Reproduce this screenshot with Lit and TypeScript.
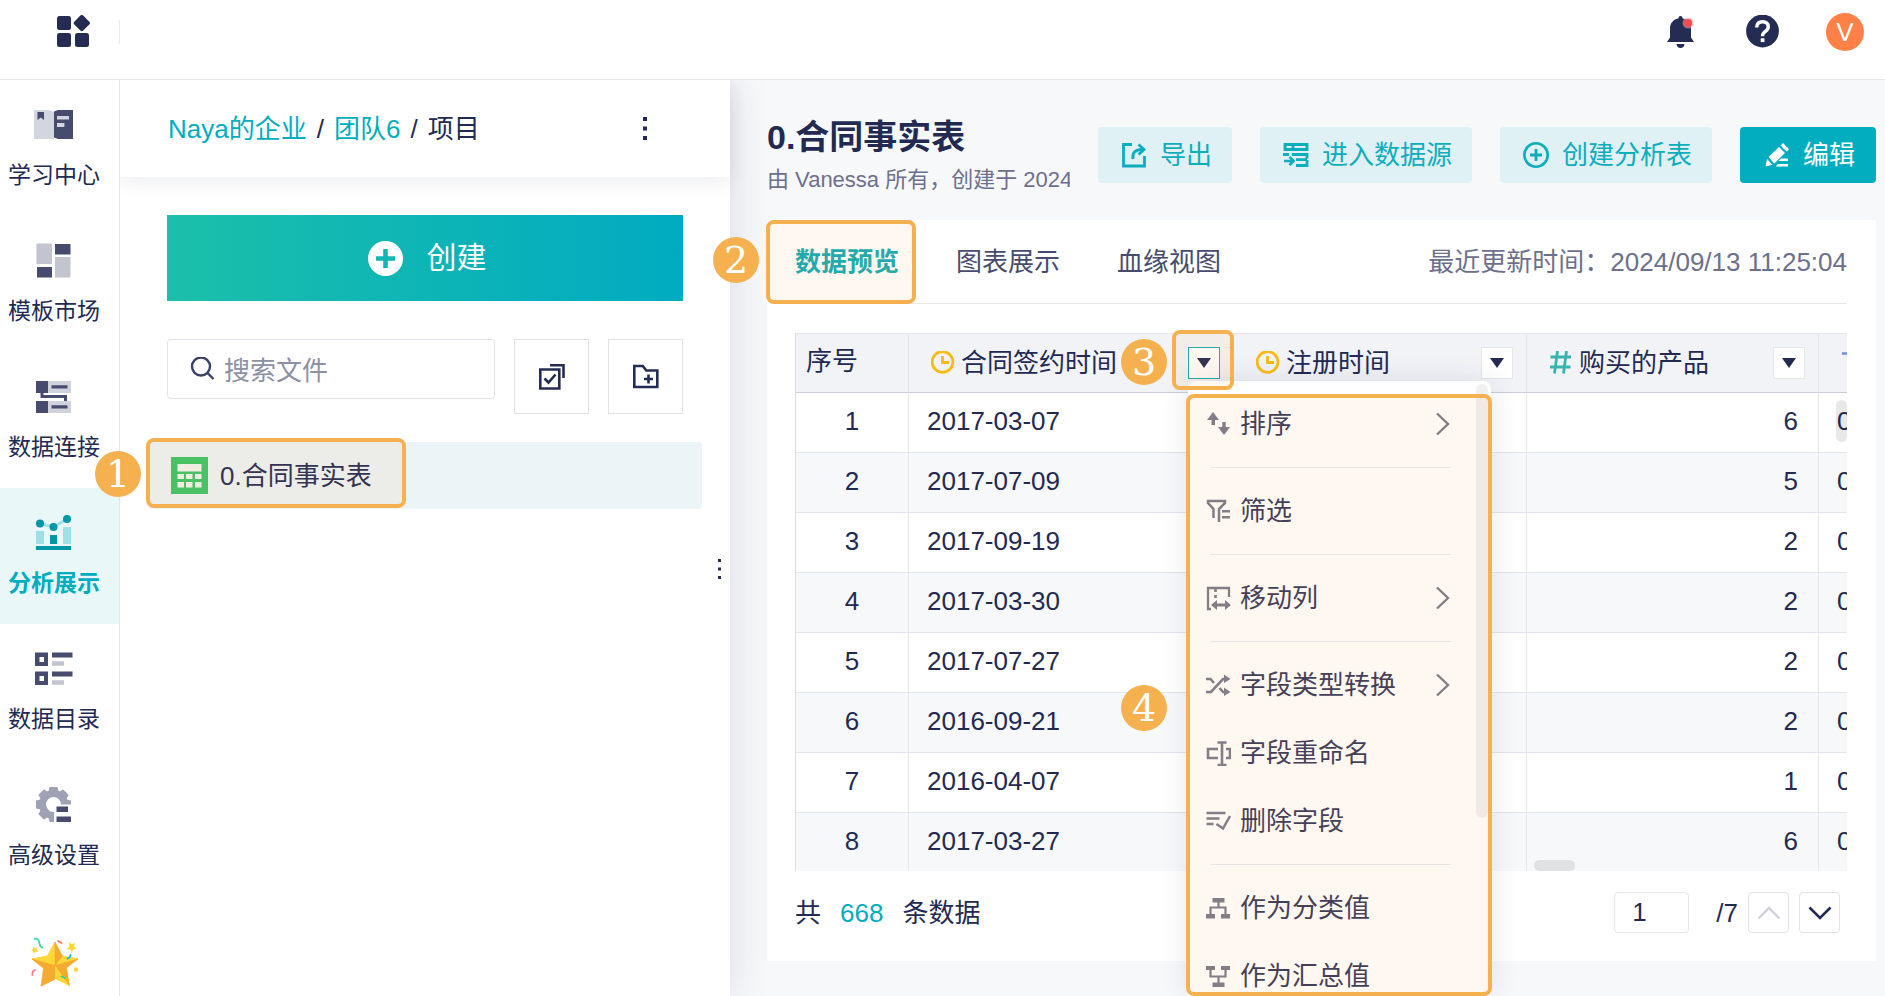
import { LitElement, html, svg, css } from "lit";
import { customElement, state } from "lit/decorators.js";
import { classMap } from "lit/directives/class-map.js";

const icons = {
  learn: svg`<path fill="#d3d5df" d="M0 5h15l5 2v27H0z"/><path fill="#474c6e" d="M39 5H24l-4 1.5v26L24 34h15z"/><path fill="#474c6e" d="M3.5 7H10v8l-3.2-2.4L3.5 15z"/><path fill="#d3d5df" d="M23 11h12v3.4H23zM23 18h7.4v4H23z"/>`,
  market: svg`<path fill="#c2c4d0" d="M2.5 2.5H18V23H2.5zM21 16h15.5v20.5H21z"/><path fill="#474c6e" d="M21 3h15.5v10.5H21zM3 26h15v10.5H3z"/>`,
  connect: svg`<path fill="#d0d2dc" d="M13 4h24v12H13zM13 24h24v12H13z"/><path fill="#474c6e" d="M2 4h12v12H9.5v2H33v6h-3v-3H6.500v-5H2zM2 24h12v12H2zM17.500 8.300h16v3.200h-16zM17.500 28.300h16v3.200h-16z"/>`,
  analyze: svg`<path fill="none" stroke="#9ee0e6" stroke-width="2.800" d="M6 10.500 19.500 14 33 6"/><path fill="#9ee0e6" d="M2 18h8v13H2zM29 14h8v17h-8z"/><path fill="#0097a7" d="M16 22h7v9h-7zM2 33h35v4H2z"/><circle cx="6" cy="10.500" r="4" fill="#0097a7"/><circle cx="19.500" cy="14" r="4" fill="#0097a7"/><circle cx="33" cy="6" r="4" fill="#0097a7"/>`,
  catalog: svg`<path fill="#474c6e" fill-rule="evenodd" d="M1 3.500h13V17H1zM5.500 8v5H10V8zM1 22.500h13V36H1zM5.500 27v5H10v-5zM18 3.500h20.500v5H18zM18 22.500h20.500v5H18z"/><path fill="#c2c4d0" d="M18 12.300h12v4.500H18zM18 31.300h12v4.500H18z"/>`,
  advanced: svg`<circle cx="19.500" cy="19.500" r="11" fill="none" stroke="#9fa1b5" stroke-width="7"/>${[0, 45, 90, 135, 180, 225, 270, 315].map(
    (a) => svg`<path fill="#9fa1b5" d="M15.500 2h8l1 5h-10z" transform="rotate(${a} 19.500 19.500)"/>`
  )}<path fill="#fff" d="M20 19.500h19V39H20z"/><path fill="#474c6e" d="M22.500 21.500H34V27H22.500zM22.500 31.500h14.500v5.500H22.500z"/>`,
  sort: svg`<path fill="#7b7a8a" d="M7 0l6 8H9v5H5.500V8H1zM18 23l-6-8h4.300v-5h3.400v5H24z"/>`,
  filter: svg`<path fill="none" stroke="#7b7a8a" stroke-width="2.500" d="M7.500 19v-9L2 4V2.100h17V4l-6 6v13"/><path fill="#7b7a8a" d="M16 11h8v2.600h-8zM16 17h8v2.600h-8z"/>`,
  move: svg`<path fill="none" stroke="#7b7a8a" stroke-width="2.300" d="M5 23H2V2h21v9"/><path stroke="#7b7a8a" stroke-width="2.600" d="M9.500 2v4M9.500 9v3"/><path fill="#7b7a8a" d="M5 19l6-5v3.500h8V14l6 5-6 5v-3.500h-8V24z"/>`,
  convert: svg`<path fill="none" stroke="#7b7a8a" stroke-width="2.600" d="M0 19h5L17 6h3M0 6h4.500l3.500 4M13.500 15l3.500 4h3"/><path fill="#7b7a8a" d="M18 1.500 24.500 6 18 10zM18 14.500l6.500 4.500-6.500 4z"/>`,
  rename: svg`<path fill="none" stroke="#7b7a8a" stroke-width="2.600" d="M12 8H2v9h10M20 8h4v9h-4M11.500 1.500h9M11.500 24h9M16 1v23"/>`,
  remove: svg`<path fill="none" stroke="#7b7a8a" stroke-width="2.500" d="M.5 4h19M.5 9.500h13M.5 15h7M10.500 15l6.500 4.500L24 7"/>`,
  dimension: svg`<path fill="#7b7a8a" d="M6.500 2h12v4.500h-12zM0 18h9v4.500H0zM15 18h9v4.500h-9z"/><path fill="none" stroke="#7b7a8a" stroke-width="2.200" d="M12.500 6v5.500M4.500 19v-7.500h15V19"/>`,
  measure: svg`<path fill="#7b7a8a" d="M0 2h9v4H0zM15 2h9v4h-9zM6.500 18.500h12V23h-12z"/><path fill="none" stroke="#7b7a8a" stroke-width="2.200" d="M4.500 5v7.500h15V5M12.500 12v7"/>`,
  clock: svg`<circle cx="11.500" cy="11" r="10.400" fill="none" stroke="#fbbb16" stroke-width="2.800"/><path fill="none" stroke="#fbbb16" stroke-width="2.800" d="M11.500 5v6.500H18"/>`,
  hash: svg`<path fill="none" stroke="#37b4ac" stroke-width="2.800" d="M8.500 0 5.500 22.500M17.500 0l-3 22.500M1.500 6H22M1 16h20.500"/>`,
  text: svg`<path fill="none" stroke="#6f8fe0" stroke-width="2.600" d="M1 2.500h20M11 2.500V23"/>`,
  exportIcon: svg`<path fill="none" stroke="currentColor" stroke-width="2.800" d="M11 2.500H2.500v21.500H23.500V14M12 17c-1-6 2-9.500 9-9.500"/><path fill="none" stroke="currentColor" stroke-width="2.800" d="M17.500 2.500l5.500 5-5.500 5"/>`,
  source: svg`<path fill="none" stroke="currentColor" stroke-width="2.800" d="M2 2.500h22v5H2zM10 2.500v5M0 12.500h6M9 12.500h15v4M24 18v5.500H13M13 17.700h11"/><path fill="none" stroke="currentColor" stroke-width="2.600" d="M1 19h9M6.500 14.800l4.200 4.200-4.200 4.200"/>`,
  plusRing: svg`<circle cx="13" cy="13" r="11.700" fill="none" stroke="currentColor" stroke-width="2.600"/><path stroke="currentColor" stroke-width="2.800" d="M13 7v12M7 13h12"/>`,
  pencil: svg`<path fill="currentColor" d="M1.500 24.500 3 17l5.500 5.800zM4.500 15 15 5l6 6L10.300 21.500zM16.500 3.500 19 1l6 6.200-2.500 2.400zM17 16.500h7V19h-9.500zM14 22h10v2.500H11.500z"/>`,
};

type IconName = keyof typeof icons;

const navItems: { icon: IconName; label: string }[] = [
  { icon: "learn", label: "学习中心" },
  { icon: "market", label: "模板市场" },
  { icon: "connect", label: "数据连接" },
  { icon: "analyze", label: "分析展示" },
  { icon: "catalog", label: "数据目录" },
  { icon: "advanced", label: "高级设置" },
];

const tabs = ["数据预览", "图表展示", "血缘视图"];

const columns: { icon: IconName; label: string }[] = [
  { icon: "clock", label: "合同签约时间" },
  { icon: "clock", label: "注册时间" },
  { icon: "hash", label: "购买的产品" },
];

const rows: [string, string][] = [
  ["2017-03-07", "6"],
  ["2017-07-09", "5"],
  ["2017-09-19", "2"],
  ["2017-03-30", "2"],
  ["2017-07-27", "2"],
  ["2016-09-21", "2"],
  ["2016-04-07", "1"],
  ["2017-03-27", "6"],
];

const menu: { icon: IconName; label: string; sub?: boolean; line?: boolean }[] = [
  { icon: "sort", label: "排序", sub: true, line: true },
  { icon: "filter", label: "筛选", line: true },
  { icon: "move", label: "移动列", sub: true, line: true },
  { icon: "convert", label: "字段类型转换", sub: true },
  { icon: "rename", label: "字段重命名" },
  { icon: "remove", label: "删除字段", line: true },
  { icon: "dimension", label: "作为分类值" },
  { icon: "measure", label: "作为汇总值" },
];

const glyph = (name: IconName, box: number) =>
  html`<svg width=${box} height=${box} viewBox="0 0 ${box} ${box}" aria-hidden="true">${icons[name]}</svg>`;

@customElement("app-root")
export class AppRoot extends LitElement {
  @state() private nav = 3;
  @state() private tab = 0;

  static styles = css`
    :host {
      display: flex;
      flex-direction: column;
      height: 100vh;
      overflow: hidden;
      background: #fff;
      color: #232a52;
      font-family: "Liberation Sans", "Noto Sans CJK SC", sans-serif;
      font-size: 26px;
      line-height: 36px;
    }
    * { box-sizing: border-box; }
    svg { display: block; flex: none; }
    a { color: inherit; text-decoration: none; }
    button, input { font: inherit; color: inherit; margin: 0; padding: 0; border: 0; background: none; border-radius: 0; }
    button { cursor: pointer; }

    .topbar { display: flex; align-items: center; flex: none; height: 80px; padding: 0 21px 16px 56px; border-bottom: 1px solid #e6e7ea; }
    .brand { display: flex; align-items: center; width: 64px; height: 24px; border-right: 1px solid #e9e9ee; }
    .tools { display: flex; align-items: center; gap: 47px; margin-left: auto; }
    .avatar { width: 38px; height: 38px; border-radius: 50%; background: #ff8148; color: #fff; text-align: center; }

    .body { position: relative; display: flex; flex: 1; min-height: 0; }

    .sidebar { flex: none; width: 120px; border-right: 1px solid #e6e7ea; font-size: 23px; line-height: 30px; overflow: hidden; }
    .nav-item { display: flex; flex-direction: column; align-items: center; gap: 15px; height: 136px; padding: 25px 11px 0 0; white-space: nowrap; }
    .nav-item.active { background: #e9f7f9; color: #00adbf; font-weight: 700; }
    .star { display: flex; justify-content: center; padding: 41px 10px 0 0; }

    .files { position: relative; z-index: 1; flex: none; width: 610px; background: #fff; box-shadow: 0 0 40px rgba(35, 42, 82, 0.14); clip-path: inset(0 -60px 0 0); }
    .files-head { display: flex; align-items: center; height: 97px; padding: 0 83px 0 48px; box-shadow: 0 4px 20px rgba(35, 42, 82, 0.09); }
    .crumbs { display: flex; gap: 10px; }
    .crumbs a { color: #00adbf; }
    .more { margin-left: auto; }
    .files-body { padding: 38px 47px; }
    .create { display: flex; align-items: center; justify-content: center; gap: 24px; width: 100%; height: 86px; padding-left: 4px; font-size: 30px; color: #fff; background: linear-gradient(90deg, #1bbfaa, #00abc1); }
    .search-row { display: flex; align-items: flex-start; gap: 19px; margin-top: 38px; }
    .search { display: flex; align-items: center; gap: 9px; flex: 1; min-width: 0; height: 60px; padding: 0 22px; border: 1px solid #e1e2ea; border-radius: 4px; }
    .search input { flex: 1; min-width: 0; height: 44px; padding-top: 4px; outline: none; }
    .search input::placeholder { color: #8d90a5; opacity: 1; }
    .square { display: flex; align-items: center; justify-content: center; width: 75px; height: 75px; border: 1px solid #e1e2e8; }
    .file { position: relative; display: flex; align-items: center; gap: 12px; height: 67px; margin: 28px -19px 0; padding: 0 23px; background: #ebf4f7; border-radius: 4px; }
    .resize { position: absolute; right: 9px; top: 479px; }

    .main { position: relative; flex: 1; min-width: 0; display: flex; flex-direction: column; padding: 0 9px 35px 37px; background: #f7f8fa; }
    .main-head { display: flex; flex: none; align-items: flex-start; gap: 28px; height: 140px; padding-top: 36px; }
    .heading { flex: 1; min-width: 0; overflow: hidden; white-space: nowrap; }
    .heading h1 { margin: 0; font-size: 34px; line-height: 42px; font-weight: 700; }
    .heading p { margin: 0; font-size: 22px; line-height: 44px; color: #6d708c; }
    .action { display: flex; align-items: center; gap: 13px; flex: none; height: 56px; margin-top: 11px; padding: 0 20px 0 23px; border-radius: 4px; background: #dff1f5; color: #0cadbd; white-space: nowrap; }
    .action.primary { padding: 0 21px 0 24px; background: #02adc0; color: #fff; }

    .card { position: relative; display: flex; flex-direction: column; flex: 1; min-height: 0; padding: 0 29px 0 28px; background: #fff; }
    .tabs { display: flex; align-items: center; gap: 57px; flex: none; height: 84px; border-bottom: 1px solid #e6e7ea; }
    .tab { white-space: nowrap; color: #474c6e; }
    .tab.active { color: #12abb4; font-weight: 700; }
    .updated { margin-left: auto; color: #6d708c; white-space: nowrap; }

    .grid { position: relative; flex: 1; min-height: 0; margin-top: 29px; overflow: hidden; border-left: 1px solid #dcdee6; border-top: 1px solid #e6e7ec; }
    table { width: 1315px; table-layout: fixed; border-collapse: separate; border-spacing: 0; }
    .c-no { width: 113px; }
    .c-sign { width: 325px; }
    .c-reg { width: 293px; }
    .c-buy, .c-last { width: 292px; }
    th { height: 59px; padding: 0; font-weight: 400; text-align: left; background: #f2f3f7; border-right: 1px solid #e3e5ea; border-bottom: 1px solid #cccfd9; }
    th.no { padding: 0 0 5px 10px; }
    .th { display: flex; align-items: center; gap: 6px; padding: 0 13px 0 22px; white-space: nowrap; }
    .drop { display: flex; align-items: center; justify-content: center; width: 32px; height: 32px; margin-left: auto; border: 1px solid #e6e7ec; background: #fff; }
    .drop.open { border-color: #12abb4; }
    td { height: 60px; padding: 0 20px 3px 18px; border-right: 1px solid #e6e7ec; border-bottom: 1px solid #e3e5ec; }
    td.no { padding: 0 0 3px; text-align: center; }
    td.num { text-align: right; }
    tr:nth-child(even) td { background: #f7f8fa; }
    .v-thumb { position: absolute; right: 0; top: 66px; width: 11px; height: 42px; border-radius: 6px; background: rgba(0, 0, 0, 0.09); }
    .h-thumb { position: absolute; left: 738px; bottom: 0; width: 41px; height: 11px; border-radius: 6px; background: rgba(0, 0, 0, 0.09); }

    .pager { display: flex; align-items: center; flex: none; height: 90px; padding: 0 7px 7px 0; }
    .count { color: #00adbf; margin: 0 19px; }
    .page { width: 75px; height: 41px; margin: 0 27px 0 auto; padding: 0 17px; border: 1px solid #e6e7ec; border-radius: 4px; }
    .step { display: flex; align-items: center; justify-content: center; width: 41px; height: 41px; margin-left: 10px; border: 1px solid #e1e3e8; border-radius: 4px; }

    .menu { position: absolute; left: 458px; top: 301px; bottom: 0; width: 303px; background: #fff; border-radius: 8px 8px 0 0; box-shadow: 0 0 28px rgba(35, 42, 82, 0.12); }
    .menu-list { height: 100%; padding-top: 9px; overflow: hidden; }
    .menu-item { display: flex; align-items: center; gap: 9px; width: 100%; height: 68px; padding: 0 41px 0 18px; white-space: nowrap; color: #36385a; }
    .menu-item .chev { margin-left: auto; }
    .rule { height: 1px; margin: 9px 40px 9px 23px; background: #e9e9ee; }
    .menu-thumb { position: absolute; right: 3px; top: 3px; width: 12px; height: 434px; border-radius: 6px; background: rgba(0, 0, 0, 0.06); }

    .mark { position: absolute; border: 4px solid #f5b14f; border-radius: 8px; background: rgba(255, 168, 80, 0.08); pointer-events: none; }
    .badge { position: absolute; z-index: 3; width: 46px; height: 46px; border-radius: 50%; background: #f5b14f; color: #fff; font: 38px/46px "DejaVu Serif", serif; text-align: center; pointer-events: none; }
    .mark-file { left: -2px; top: -4px; width: 260px; height: 70px; }
    .badge-file { left: 95px; top: 371px; }
    .mark-tab { left: -1px; top: 0; width: 150px; height: 84px; }
    .badge-tab { left: 713px; top: 157px; }
    .mark-drop { left: 442px; top: 250px; width: 62px; height: 60px; }
    .badge-drop { left: 391px; top: 259px; }
    .mark-menu { left: -2px; right: -1px; top: 13px; bottom: 0; }
    .badge-menu { left: 391px; top: 605px; }
  `;

  private caret() {
    return html`<svg width="14" height="10" viewBox="0 0 14 10" aria-hidden="true"><path fill="#232a52" d="M0 0h14L7 10z" /></svg>`;
  }

  private dots(size: number, height: number) {
    const step = (height - size) / 2;
    return html`<svg width=${size} height=${height} aria-hidden="true">
      ${[0, 1, 2].map((i) => svg`<rect y=${i * step} width=${size} height=${size} fill="#232a52"/>`)}
    </svg>`;
  }

  private topbar() {
    return html`<header class="topbar">
      <a class="brand" href="#" aria-label="应用">
        <svg width="36" height="34" viewBox="0 0 36 34"><g fill="#252c53"><rect x="1" y="1" width="14" height="14" rx="2.500"/><rect x="1" y="18" width="14" height="14" rx="2.500"/><rect x="19" y="18" width="14" height="14" rx="2.500"/><rect x="19.500" y="1.800" width="12.600" height="12.600" rx="2" transform="rotate(45 25.800 8.100)"/></g></svg>
      </a>
      <div class="tools">
        <button aria-label="通知">
          <svg width="32" height="34" viewBox="0 0 32 34"><path fill="#252c53" d="M14.500 1q2 0 2.200 2.400C22.500 4.500 25 8.500 25 14v8.500l3 4.500H1l3-4.500V14C4 8.500 6.500 4.500 12.300 3.400Q12.500 1 14.500 1zM10.500 29h8q-.5 4-4 4t-4-4z"/><circle cx="22" cy="8" r="5.500" fill="#ef9aa4" fill-opacity=".6"/><circle cx="22" cy="8" r="4" fill="#f24b50"/></svg>
        </button>
        <button aria-label="帮助">
          <svg width="34" height="34" viewBox="0 0 34 34"><circle cx="17.500" cy="16" r="16.400" fill="#252c53"/><path fill="none" stroke="#fff" stroke-width="3.400" d="M11.700 12.500q.3-5.700 5.800-5.700t5.800 5q0 2.700-3.200 4.900-2.600 1.800-2.600 4.500"/><rect x="15.700" y="23.300" width="3.800" height="3.800" fill="#fff"/></svg>
        </button>
        <button class="avatar" aria-label="账户">V</button>
      </div>
    </header>`;
  }

  private sidebar() {
    return html`<nav class="sidebar">
      ${navItems.map(
        (n, i) => html`<a href="#" class=${classMap({ "nav-item": true, active: i === this.nav })} @click=${() => (this.nav = i)}>${glyph(n.icon, 40)}<span>${n.label}</span></a>`
      )}
      <div class="star">
        <svg width="50" height="52" viewBox="0 0 50 52" aria-hidden="true">
          <g fill="#fdd737" stroke="#fdd737" stroke-width="1" stroke-linejoin="round"><path d="M25 28.500V5l-7.500 14z"/><path d="M25 28.500 2 22l11.500 9z"/><path d="M25 28.500 25 42 11 49z" fill="#f5a931" stroke="#f5a931"/><path d="M25 28.500 39.500 49l-3-18z"/><path d="M25 28.500 48 22l-15.500-3z"/><path d="M25 28.500 2 22l15.500-3z"/></g>
          <g fill="#f5a931" stroke="#f5a931" stroke-width=".6" stroke-linejoin="round"><path d="M25 28.500V5l7.500 14z"/><path d="M25 28.500 48 22l-11.500 9z"/><path d="M25 28.500 13.500 31 2 22z"/><path d="M25 28.500 13.500 31 11 49z"/></g>
          <path fill="#fdd737" d="M25 28.500 39.500 49 25 42 11 49l14-7z"/><path fill="#f5a931" d="M25 28.500 39.500 49l-3-18z"/>
          <path fill="#fdd737" d="M39 5l2.700 2.300L45 6l-1 3.600 3 2.400-3.800.3L41.800 16l-1.500-3.500-3.800-.2 2.800-2.500zM3 9.500l1.800 1.600 2.400-.8-.7 2.500 1.800 1.900-2.500.1-1.500 2-1-2.400-2.500-.7 2.100-1.500z"/><circle cx="46" cy="32.500" r="2.200" fill="#fdd737"/>
          <g fill="none" stroke-width="1.800" stroke-linecap="round"><path stroke="#35dfa5" d="M4.500 2q4-1.500 5 4.500.3 3.500 3 4"/><path stroke="#fb7a5c" d="M28 4l3.500 2"/><path stroke="#23b6e8" d="M40.500 18q-.3 3-3 3.500"/><path stroke="#fb7a8c" d="M5 33q-3 1-2.600 5"/><path stroke="#35cf95" d="M31.500 39.500l3.500 1.500"/></g>
        </svg>
      </div>
    </nav>`;
  }

  private files() {
    return html`<section class="files">
      <div class="files-head">
        <div class="crumbs"><a href="#">Naya的企业</a><span>/</span><a href="#">团队6</a><span>/</span><span>项目</span></div>
        <button class="more" aria-label="更多">${this.dots(4, 23)}</button>
      </div>
      <div class="files-body">
        <button class="create">
          <svg width="35" height="35" viewBox="0 0 35 35" aria-hidden="true"><circle cx="17.500" cy="17.500" r="17.500" fill="#fff"/><path stroke="#13b6b3" stroke-width="4.600" d="M17.500 8v19M8 17.500h19"/></svg>
          创建
        </button>
        <div class="search-row">
          <label class="search">
            <svg width="25" height="25" viewBox="0 0 25 25" aria-hidden="true"><g fill="none" stroke="#3b4168" stroke-width="2.400"><circle cx="11" cy="9.500" r="9"/><path d="M17.500 16l6 6"/></g></svg>
            <input type="text" placeholder="搜索文件" aria-label="搜索文件" />
          </label>
          <button class="square" aria-label="批量选择">
            <svg width="26" height="26" viewBox="0 0 26 26"><g fill="none" stroke="#252c53" stroke-width="2.600"><path d="M1.300 5.500h19v19h-19zM11 1.200h13.500V14M5.500 14.500l4 4 7-8"/></g></svg>
          </button>
          <button class="square" aria-label="新建文件夹">
            <svg width="26" height="26" viewBox="0 0 26 26"><g fill="none" stroke="#252c53" stroke-width="2.600"><path d="M1.300 2h8.500l3.500 4.500h11V23h-23zM15.500 10.500v9M11 15h9"/></g></svg>
          </button>
        </div>
        <a class="file" href="#">
          <svg width="37" height="37" viewBox="0 0 37 37" aria-hidden="true"><rect width="37" height="37" fill="#3ac569"/><path fill="#f1f3ee" d="M6.500 7h24v7.500h-24zM6.500 17H13v5H6.500zM15 17h6.500v5H15zM24 17h6.500v5H24zM6.500 25H13v5.500H6.500zM15 25h6.500v5.500H15zM24 25h6.500v5.500H24z"/></svg>
          <span>0.合同事实表</span>
          <span class="mark mark-file"></span>
        </a>
      </div>
      <div class="resize">${this.dots(3, 20)}</div>
    </section>`;
  }

  private table() {
    const sizes = ["c-sign", "c-reg", "c-buy"];
    return html`<div class="grid">
      <table>
        <colgroup><col class="c-no" />${sizes.map((s) => html`<col class=${s} />`)}<col class="c-last" /></colgroup>
        <thead><tr>
          <th class="no">序号</th>
          ${columns.map(
            (c, i) => html`<th><div class="th">${glyph(c.icon, 24)}<span>${c.label}</span><button class=${classMap({ drop: true, open: i === 0 })} aria-label="${c.label}菜单">${this.caret()}</button></div></th>`
          )}
          <th><div class="th">${glyph("text", 24)}</div></th>
        </tr></thead>
        <tbody>
          ${rows.map(
            ([date, amount], i) => html`<tr><td class="no">${i + 1}</td><td>${date}</td><td></td><td class="num">${amount}</td><td>0</td></tr>`
          )}
        </tbody>
      </table>
      <span class="v-thumb"></span><span class="h-thumb"></span>
    </div>`;
  }

  private columnMenu() {
    return html`<div class="menu">
      <div class="menu-list">
        ${menu.map(
          (m) => html`<button class="menu-item">
              ${glyph(m.icon, 25)}<span>${m.label}</span>
              ${m.sub ? html`<svg class="chev" width="14" height="24" viewBox="0 0 14 24" aria-hidden="true"><path fill="none" stroke="#7b7a8a" stroke-width="2.400" d="M1 1.500 12 12 1 22.500"/></svg>` : ""}
            </button>
            ${m.line ? html`<div class="rule"></div>` : ""}`
        )}
      </div>
      <span class="menu-thumb"></span>
      <span class="mark mark-menu"></span>
    </div>`;
  }

  private main() {
    return html`<main class="main">
      <div class="main-head">
        <div class="heading"><h1>0.合同事实表</h1><p>由 Vanessa 所有，创建于 2024</p></div>
        <button class="action">${glyph("exportIcon", 26)}导出</button>
        <button class="action">${glyph("source", 26)}进入数据源</button>
        <button class="action">${glyph("plusRing", 26)}创建分析表</button>
        <button class="action primary">${glyph("pencil", 26)}编辑</button>
      </div>
      <div class="card">
        <div class="tabs">
          ${tabs.map((t, i) => html`<button class=${classMap({ tab: true, active: i === this.tab })} @click=${() => (this.tab = i)}>${t}</button>`)}
          <span class="updated">最近更新时间：2024/09/13 11:25:04</span>
        </div>
        ${this.table()}
        <div class="pager">
          <span>共</span><span class="count">668</span><span>条数据</span>
          <input class="page" type="text" value="1" aria-label="页码" />
          <span>/7</span>
          <button class="step" aria-label="上一页" disabled><svg width="24" height="14" viewBox="0 0 24 14"><path fill="none" stroke="#cfd1dc" stroke-width="2.400" d="M1.500 12.500 12 2l10.500 10.500"/></svg></button>
          <button class="step" aria-label="下一页"><svg width="24" height="14" viewBox="0 0 24 14"><path fill="none" stroke="#232a52" stroke-width="2.600" d="M1.500 1.500 12 12 22.500 1.500"/></svg></button>
        </div>
        <span class="mark mark-tab"></span>
      </div>
      ${this.columnMenu()}
      <span class="mark mark-drop"></span>
      <span class="badge badge-drop">3</span>
      <span class="badge badge-menu">4</span>
    </main>`;
  }

  render() {
    return html`${this.topbar()}
      <div class="body">
        ${this.sidebar()}${this.files()}${this.main()}
        <span class="badge badge-file">1</span>
        <span class="badge badge-tab">2</span>
      </div>`;
  }
}
